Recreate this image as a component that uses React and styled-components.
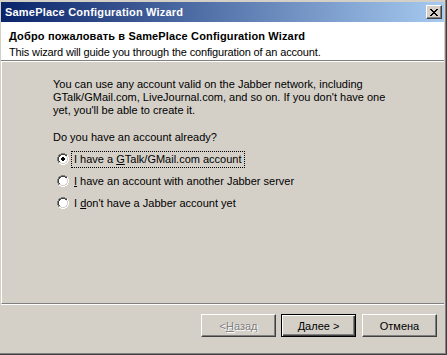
import React from 'react';
import styled, { createGlobalStyle } from 'styled-components';

const GlobalStyle = createGlobalStyle`
  html, body {
    margin: 0;
    padding: 0;
    background: #d4d0c8;
  }
  body {
    font-family: "Liberation Sans", Arial, sans-serif;
    font-size: 11px;
    color: #000;
  }
`;

const Window = styled.div`
  width: 447px;
  height: 355px;
  box-sizing: border-box;
  background: #d4d0c8;
  border-right: 1px solid #404040;
  border-bottom: 1px solid #404040;
  display: flex;
`;

const Frame = styled.div`
  flex: 1;
  display: flex;
  flex-direction: column;
  border-right: 1px solid #808080;
  border-bottom: 1px solid #808080;
  padding: 2px 1px 1px 1px;
  min-width: 0;
`;

const TitleBar = styled.div`
  height: 20px;
  display: flex;
  align-items: center;
  justify-content: space-between;
  padding: 0 2px 0 4px;
  background: linear-gradient(to right, #0a246a, #a6caf0);
  color: #fff;
  font-weight: bold;
  font-size: 11px;
  letter-spacing: 0.2px;
`;

const CloseButton = styled.div`
  width: 16px;
  height: 14px;
  box-sizing: border-box;
  background: #d4d0c8;
  border-top: 1px solid #fff;
  border-left: 1px solid #fff;
  border-right: 1px solid #404040;
  border-bottom: 1px solid #404040;
  box-shadow: inset -1px -1px 0 #808080;
  display: flex;
  align-items: center;
  justify-content: center;
`;

const Header = styled.div`
  height: 39px;
  background: #fff;
  padding: 7px 0 0 8px;
  box-sizing: border-box;
  border-bottom: 1px solid #808080;
`;

const HeaderTitle = styled.div`
  font-weight: bold;
  line-height: 14px;
  letter-spacing: 0.15px;
`;

const HeaderSub = styled.div`
  line-height: 14px;
  margin-top: 2px;
  letter-spacing: -0.15px;
`;

const Body = styled.div`
  flex: 1;
  border-top: 1px solid #fff;
  border-left: 1px solid #fff;
  padding: 16px 0 0 51px;
  border-bottom: 1px solid #808080;
`;

const Para = styled.div`
  line-height: 13px;
  white-space: nowrap;
  margin-bottom: ${p => p.$gap || 0}px;
`;

const RadioList = styled.div`
  display: flex;
  flex-direction: column;
  margin-top: 4px;
  padding-left: 4px;
`;

const RadioRow = styled.div`
  height: 22px;
  display: flex;
  align-items: center;
  gap: 3px;
`;

const RadioLabel = styled.span`
  padding: 1px 2px;
  line-height: 13px;
  outline: ${p => (p.$focused ? '1px dotted #000' : 'none')};
  outline-offset: 0;
  white-space: nowrap;
`;

const Footer = styled.div`
  height: 48px;
  box-sizing: border-box;
  border-top: 1px solid #fff;
  display: flex;
  justify-content: flex-end;
  align-items: flex-start;
  padding: 9px 7px 0 0;
`;

const Button = styled.div`
  width: 75px;
  height: 23px;
  box-sizing: border-box;
  margin-left: ${p => p.$ml || 0}px;
  display: flex;
  align-items: center;
  justify-content: center;
  background: #d4d0c8;
  border: 1px solid ${p => (p.$default ? '#000' : 'transparent')};
  border-top-color: ${p => (p.$default ? '#000' : '#fff')};
  border-left-color: ${p => (p.$default ? '#000' : '#fff')};
  border-right-color: ${p => (p.$default ? '#000' : '#404040')};
  border-bottom-color: ${p => (p.$default ? '#000' : '#404040')};
  box-shadow: ${p =>
    p.$default
      ? 'inset 1px 1px 0 #fff, inset -1px -1px 0 #404040, inset -2px -2px 0 #808080'
      : 'inset -1px -1px 0 #808080'};
  color: ${p => (p.$disabled ? '#808080' : '#000')};
  text-shadow: ${p => (p.$disabled ? '1px 1px 0 #fff' : 'none')};
`;

const U = styled.span`
  text-decoration: underline;
`;

const Radio = ({ checked }) => (
  <svg width="12" height="12" viewBox="0 0 12 12" shapeRendering="crispEdges">
    <path d="M4 0h4v1H4zM2 1h2v1H2zM8 1h2v1H8zM1 2h1v2H1zM0 4h1v4H0zM1 8h1v2H1z" fill="#808080" />
    <path d="M10 2h1v2h-1zM11 4h1v4h-1zM10 8h1v2h-1zM8 10h2v1H8zM2 10h2v1H2zM4 11h4v1H4z" fill="#fff" />
    <path d="M4 1h4v1H4zM2 2h2v1H2zM8 2h2v1H8zM2 3h1v1H2zM1 4h1v4H1zM2 8h1v1H2z" fill="#404040" />
    <path d="M9 3h1v1H9zM10 4h1v4h-1zM9 8h1v1H9zM8 9h2v1H8zM2 9h2v1H2zM4 10h4v1H4z" fill="#d4d0c8" />
    <path d="M4 2h4v1h1v1h1v4H9v1H8v1H4V9H3V8H2V4h1V3h1z" fill="#fff" />
    {checked && <path d="M5 4h2v1h1v2H7v1H5V7H4V5h1z" fill="#000" />}
  </svg>
);

export default function App() {
  return (
    <>
      <GlobalStyle />
      <Window>
        <Frame>
          <TitleBar>
            <span>SamePlace Configuration Wizard</span>
            <CloseButton>
              <svg width="8" height="7" viewBox="0 0 8 7" shapeRendering="crispEdges">
                <path d="M0 0h2v1h1v1h2V1h1V0h2v1H7v1H6v1H5v1h1v1h1v1h1v1H6V6H5V5H3v1H2v1H0V6h1V5h1V4h1V3H2V2H1V1H0z" fill="#000" />
              </svg>
            </CloseButton>
          </TitleBar>
          <Header>
            <HeaderTitle>Добро пожаловать в SamePlace Configuration Wizard</HeaderTitle>
            <HeaderSub>This wizard will guide you through the configuration of an account.</HeaderSub>
          </Header>
          <Body>
            <Para>You can use any account valid on the Jabber network, including</Para>
            <Para>GTalk/GMail.com, LiveJournal.com, and so on. If you don't have one</Para>
            <Para $gap={14}>yet, you'll be able to create it.</Para>
            <Para>Do you have an account already?</Para>
            <RadioList>
              <RadioRow>
                <Radio checked />
                <RadioLabel $focused>I have a <U>G</U>Talk/GMail.com account</RadioLabel>
              </RadioRow>
              <RadioRow>
                <Radio />
                <RadioLabel><U>I</U> have an account with another Jabber server</RadioLabel>
              </RadioRow>
              <RadioRow>
                <Radio />
                <RadioLabel>I <U>d</U>on't have a Jabber account yet</RadioLabel>
              </RadioRow>
            </RadioList>
          </Body>
          <Footer>
            <Button $disabled>&lt; <U>Н</U>азад</Button>
            <Button $default $ml={5}><U>Д</U>алее &gt;</Button>
            <Button $ml={6}>Отмена</Button>
          </Footer>
        </Frame>
      </Window>
    </>
  );
}
